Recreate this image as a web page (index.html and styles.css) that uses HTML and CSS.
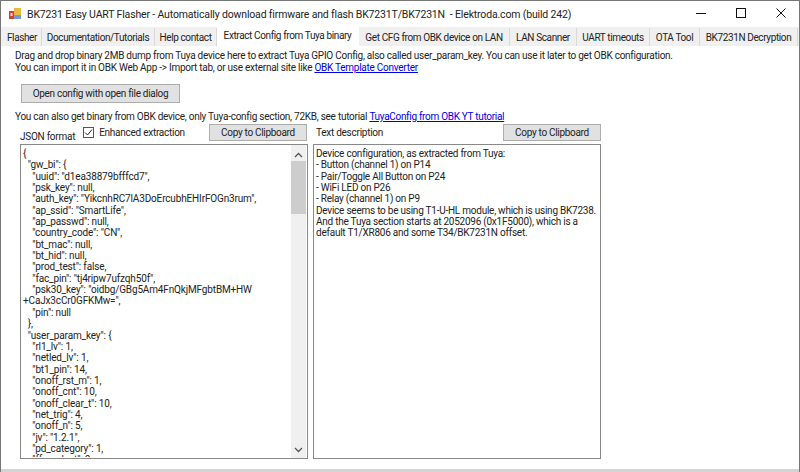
FILE: index.html
```html
<!DOCTYPE html>
<html lang="en">
<head>
<meta charset="utf-8">
<title>BK7231 Easy UART Flasher</title>
<link rel="stylesheet" href="styles.css">
</head>
<body>
<div class="window">
  <header class="titlebar">
    <svg class="app-icon" width="13" height="13" viewBox="0 0 13 13"><rect x="5" y="0" width="7" height="7" fill="#e9b93c"/><rect x="5" y="7" width="7" height="4" fill="#6f9bd8"/><rect x="0" y="3" width="5" height="8" fill="#d2402f"/><rect x="1.500" y="5" width="2" height="3" fill="#f6e6dc"/></svg>
    <span class="title-text">BK7231 Easy UART Flasher - Automatically download firmware and flash BK7231T/BK7231N&nbsp; - Elektroda.com (build 242)</span>
    <div class="controls">
      <svg width="10" height="10" viewBox="0 0 10 10"><path d="M0 5.500H10" stroke="#111" fill="none"/></svg>
      <svg width="10" height="10" viewBox="0 0 10 10"><rect x=".5" y=".5" width="9" height="9" stroke="#111" fill="none"/></svg>
      <svg width="10" height="10" viewBox="0 0 10 10"><path d="M.5 .5L9.500 9.500M9.500 .5L.5 9.500" stroke="#111" fill="none"/></svg>
    </div>
  </header>
  <nav class="tabs">
    <span class="tab w-flasher">Flasher</span>
    <span class="tab w-docs">Documentation/Tutorials</span>
    <span class="tab w-help">Help contact</span>
    <span class="tab active w-extract">Extract Config from Tuya binary</span>
    <span class="tab w-cfg">Get CFG from OBK device on LAN</span>
    <span class="tab w-lan">LAN Scanner</span>
    <span class="tab w-uart">UART timeouts</span>
    <span class="tab w-ota">OTA Tool</span>
    <span class="tab w-dec">BK7231N Decryption</span>
  </nav>
  <main class="panel">
    <p class="intro">Drag and drop binary 2MB dump from Tuya device here to extract Tuya GPIO Config, also called user_param_key. You can use it later to get OBK configuration.<br>You can import it in OBK Web App -&gt; Import tab, or use external site like <a href="#">OBK Template Converter</a></p>
    <button class="btn btn-open">Open config with open file dialog</button>
    <p class="also">You can also get binary from OBK device, only Tuya-config section, 72KB, see tutorial <a href="#">TuyaConfig from OBK YT tutorial</a></p>
    <div class="columns">
      <section class="col col-json">
        <div class="col-head">
          <span class="label label-json">JSON format</span>
          <span class="check"><svg width="9" height="9" viewBox="0 0 9 9"><path d="M1 4.500L3.500 7L8 1.500" stroke="#222" fill="none"/></svg></span>
          <span class="check-label">Enhanced extraction</span>
          <button class="btn btn-copy">Copy to Clipboard</button>
        </div>
        <div class="box">
<div class="code">{
  "gw_bi": {
    "uuid": "d1ea38879bfffcd7",
    "psk_key": null,
    "auth_key": "YikcnhRC7lA3DoErcubhEHIrFOGn3rum",
    "ap_ssid": "SmartLife",
    "ap_passwd": null,
    "country_code": "CN",
    "bt_mac": null,
    "bt_hid": null,
    "prod_test": false,
    "fac_pin": "tj4ripw7ufzqh50f",
    "psk30_key": "oidbg/GBg5Am4FnQkjMFgbtBM+HW
+CaJx3cCr0GFKMw=",
    "pin": null
  },
  "user_param_key": {
    "rl1_lv": 1,
    "netled_lv": 1,
    "bt1_pin": 14,
    "onoff_rst_m": 1,
    "onoff_cnt": 10,
    "onoff_clear_t": 10,
    "net_trig": 4,
    "onoff_n": 5,
    "jv": "1.2.1",
    "pd_category": 1,
    "ffc_select": 0</div>
          <div class="scrollbar">
            <svg width="9" height="6" viewBox="0 0 9 6"><path d="M1 5L4.500 1.500L8 5" stroke="#555" stroke-width="1.300" fill="none"/></svg>
            <div class="thumb"></div>
            <svg class="arrow-down" width="9" height="6" viewBox="0 0 9 6"><path d="M1 1L4.500 4.500L8 1" stroke="#555" stroke-width="1.300" fill="none"/></svg>
          </div>
        </div>
      </section>
      <section class="col col-text">
        <div class="col-head">
          <span class="label label-text">Text description</span>
          <button class="btn btn-copy">Copy to Clipboard</button>
        </div>
        <div class="box">
<div class="code code-text">Device configuration, as extracted from Tuya:
- Button (channel 1) on P14
- Pair/Toggle All Button on P24
- WiFi LED on P26
- Relay (channel 1) on P9
Device seems to be using T1-U-HL module, which is using BK7238.
And the Tuya section starts at 2052096 (0x1F5000), which is a
default T1/XR806 and some T34/BK7231N offset.</div>
        </div>
      </section>
    </div>
  </main>
</div>
</body>
</html>
```
FILE: styles.css
```css
* { box-sizing: border-box; }
html, body { margin: 0; padding: 0; height: 100%; overflow: hidden; }
body { font-family: Roboto, "Liberation Sans", sans-serif; font-size: 10px; letter-spacing: -0.26px; color: #222; background: #fff; }
.window { width: 800px; height: 472px; border: 1px solid #777; border-bottom: 0; display: flex; flex-direction: column; background: #fff; }
.titlebar { height: 26px; display: flex; align-items: center; padding-left: 8px; flex: none; }
.app-icon { flex: none; margin-right: 5px; }
.title-text { font-size: 10.5px; letter-spacing: -0.16px; color: #222; white-space: nowrap; flex: 1; }
.controls { display: flex; gap: 30px; margin: 0 13px 2px 0; flex: none; }
.tabs { height: 19px; background: #f0f0f0; display: flex; flex: none; padding-left: 2px; align-items: flex-end; letter-spacing: -0.38px; }
.tab { height: 18px; border-right: 1px solid #d9d9d9; text-align: center; line-height: 19px; white-space: nowrap; flex: none; }
.tab.active { height: 19px; background: #fff; border-right-color: #fff; line-height: 17px; }
.w-flasher { width: 39px; }
.w-docs { width: 113px; }
.w-help { width: 62px; }
.w-extract { width: 142px; }
.w-cfg { width: 151px; }
.w-lan { width: 67px; }
.w-uart { width: 73px; }
.w-ota { width: 50px; }
.w-dec { width: 98px; }
.panel { flex: 1; padding: 4px 0 0 14px; border-bottom: 3px solid #d4d4d4; display: flex; flex-direction: column; align-items: flex-start; min-height: 0; }
.intro, .also { margin: 0; line-height: 12px; white-space: nowrap; }
a { color: #0000e6; }
.also a { letter-spacing: -0.3px; }
.btn { font: inherit; letter-spacing: -0.3px; color: #222; background: #e1e1e1; border: 1px solid #adadad; padding: 0; white-space: nowrap; }
.btn-open { width: 159px; height: 19px; margin: 10px 0 0 6px; }
.also { margin-top: 8px; }
.columns { display: flex; gap: 5px; margin: 1px 0 0 5px; }
.col { width: 288px; }
.col-head { height: 20px; display: flex; align-items: center; white-space: nowrap; }
.label-json { margin-top: 4px; }
.check { width: 11px; height: 11px; border: 1px solid #555; margin: 0 0 3px 8px; display: flex; align-items: center; justify-content: center; background: #fff; flex: none; }
.check-label { margin: 0 0 3px 5px; }
.label-text { margin: 0 0 3px 3px; }
.btn-copy { width: 98px; height: 17px; margin-left: auto; align-self: flex-start; flex: none; }
.col-json .btn-copy { margin-right: 1px; }
.box { height: 315px; border: 1px solid #888; padding-bottom: 1px; position: relative; overflow: hidden; background: #fff; }
.code { white-space: pre-wrap; font-size: 10px; letter-spacing: -0.15px; line-height: 11.35px; padding: 3px 2px 0 2px; height: 100%; overflow: hidden; }
.code-text { white-space: pre; letter-spacing: -0.24px; }
.scrollbar { position: absolute; top: 0; right: 1px; bottom: 0; width: 15px; background: #f0f0f0; display: flex; flex-direction: column; align-items: center; padding-top: 7px; }
.thumb { width: 15px; height: 53px; background: #cdcdcd; margin-top: 3px; flex: none; }
.arrow-down { margin-top: auto; margin-bottom: 5px; }
```
